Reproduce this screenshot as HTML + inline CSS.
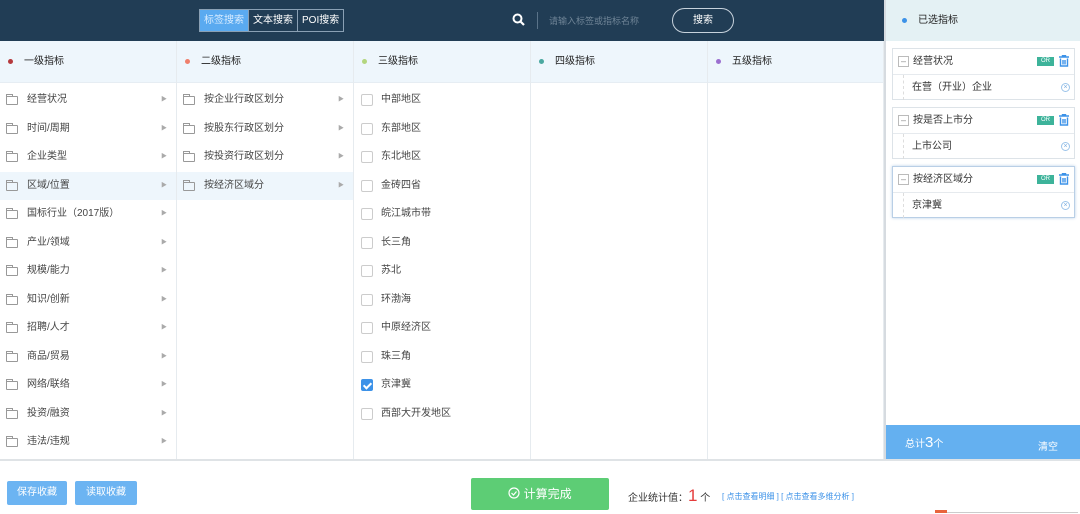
<!DOCTYPE html>
<html><head><meta charset="utf-8"><style>
*{margin:0;padding:0;box-sizing:border-box}
body{width:1080px;height:514px;overflow:hidden;background:#fff;font-family:"Liberation Sans","Noto Sans CJK SC",sans-serif;font-size:10px;color:#333;position:relative}
.top{position:absolute;left:0;top:0;width:884px;height:41px;background:#213d55}
.tabs{position:absolute;left:199px;top:9px;height:23px;display:flex;border:1px solid #8aa0b4}
.tabs div{padding:0 4px;line-height:21px;color:#fff;font-size:10px;border-right:1px solid #8aa0b4}
.tabs div:first-child{background:#5aaaf0;color:#d8ecff}
.tabs div:last-child{border:none}
.sep{position:absolute;left:537px;top:12px;width:1px;height:17px;background:#5a7389}
.ph{position:absolute;left:549px;top:14px;color:#6f8496;font-size:9px}
.sbtn{position:absolute;left:672px;top:8px;width:62px;height:25px;border:1px solid #c7d2dc;border-radius:13px;color:#fff;text-align:center;line-height:23px;font-size:10px}
.col{position:absolute;top:41px;height:418px;border-right:1px solid #e6ebef}
.hd{height:42px;background:#eef6fc;border-bottom:1px solid #e6edf3;line-height:42px;padding-left:24px;font-size:10px;color:#222;position:relative;margin-bottom:3px}
.hd i{position:absolute;left:8px;top:18px;width:5px;height:5px;border-radius:50%}
.row{height:28.5px;line-height:28.5px;padding-left:27px;position:relative;font-size:10px;color:#444}
.row.sel{background:#eef6fc}
.fold{position:absolute;left:6px;top:10px;width:12px;height:9px;border:1px solid #999;border-radius:1px}
.fold:before{content:"";position:absolute;left:-1px;top:-3px;width:5px;height:2px;border:1px solid #999;border-bottom:none}
.arr{position:absolute;right:9px;top:0;color:#aaa;font-size:6px}
.cb{position:absolute;left:7px;top:8px;width:12px;height:12px;border:1px solid #ccc;border-radius:2px;background:#fff}
.cb.on{background:#3c92e8;border-color:#3c92e8}
.cb.on:after{content:"";position:absolute;left:3px;top:1px;width:3px;height:6px;border:solid #fff;border-width:0 2px 2px 0;transform:rotate(45deg)}
.right{position:absolute;left:884px;top:0;width:196px;height:459px;background:#fff;border-left:2px solid #d6dbe0}
.rh{height:41px;background:#e4f1f4;line-height:41px;padding-left:32px;position:relative;color:#222}
.rh i{position:absolute;left:16px;top:18px;width:5px;height:5px;border-radius:50%;background:#3c92e8}
.card{position:absolute;left:6px;width:183px;height:52px;border:1px solid #dde3e8;background:#fff}
.card.act{border-color:#b9cfe6;box-shadow:0 0 3px #b9cfe6}
.card .t{height:26px;line-height:25px;border-bottom:1px solid #e6eaee;padding-left:20px;position:relative}
.card .t b{position:absolute;left:5px;top:7px;width:11px;height:11px;border:1px solid #bbb;font-weight:normal;line-height:8px;text-align:center;font-size:9px;color:#888}
.or{position:absolute;right:20px;top:8px;width:17px;height:9px;background:#3db39a;color:#fff;font-size:6px;line-height:9px;text-align:center}
.trash{position:absolute;right:5px;top:6px}
.card .v{height:25px;line-height:25px;position:relative;border-left:1px dashed #ddd;margin-left:10px;padding-left:8px}
.x{position:absolute;right:4px;top:8px;width:9px;height:9px;border:1px solid #9cc4ea;border-radius:50%;color:#7aaee0;font-size:7px;line-height:7px;text-align:center}
.tot{position:absolute;left:0;top:425px;width:194px;height:34px;background:#64b0f0;color:#fff}
.foot{position:absolute;left:0;top:459px;width:1080px;height:2px;background:#dfe3e6}
.btn{position:absolute;top:481px;height:24px;background:#6cb4f2;color:#fff;line-height:24px;text-align:center;font-size:10px;border-radius:2px}
.green{position:absolute;left:471px;top:478px;width:138px;height:32px;background:#5dcd75;color:#fff;text-align:center;line-height:32px;font-size:12px;border-radius:2px}
</style></head><body>
<div class="top">
<div class="tabs"><div>标签搜索</div><div>文本搜索</div><div>POI搜索</div></div>
<svg style="position:absolute;left:512px;top:13px" width="13" height="13" viewBox="0 0 13 13"><circle cx="5.5" cy="5.5" r="4" fill="none" stroke="#fff" stroke-width="2"/><path d="M8.5 8.5L12 12" stroke="#fff" stroke-width="2.2"/></svg>
<div class="sep"></div>
<div class="ph">请输入标签或指标名称</div>
<div class="sbtn">搜索</div>
</div>

<div class="col" style="left:0;width:177px">
<div class="hd"><i style="background:#b5393d"></i>一级指标</div>
<div class="row"><span class="fold"></span>经营状况<span class="arr">▶</span></div>
<div class="row"><span class="fold"></span>时间/周期<span class="arr">▶</span></div>
<div class="row"><span class="fold"></span>企业类型<span class="arr">▶</span></div>
<div class="row sel"><span class="fold"></span>区域/位置<span class="arr">▶</span></div>
<div class="row"><span class="fold"></span>国标行业（2017版）<span class="arr">▶</span></div>
<div class="row"><span class="fold"></span>产业/领域<span class="arr">▶</span></div>
<div class="row"><span class="fold"></span>规模/能力<span class="arr">▶</span></div>
<div class="row"><span class="fold"></span>知识/创新<span class="arr">▶</span></div>
<div class="row"><span class="fold"></span>招聘/人才<span class="arr">▶</span></div>
<div class="row"><span class="fold"></span>商品/贸易<span class="arr">▶</span></div>
<div class="row"><span class="fold"></span>网络/联络<span class="arr">▶</span></div>
<div class="row"><span class="fold"></span>投资/融资<span class="arr">▶</span></div>
<div class="row"><span class="fold"></span>违法/违规<span class="arr">▶</span></div>
</div>
<div class="col" style="left:177px;width:177px">
<div class="hd"><i style="background:#ef7f6c"></i>二级指标</div>
<div class="row"><span class="fold"></span>按企业行政区划分<span class="arr">▶</span></div>
<div class="row"><span class="fold"></span>按股东行政区划分<span class="arr">▶</span></div>
<div class="row"><span class="fold"></span>按投资行政区划分<span class="arr">▶</span></div>
<div class="row sel"><span class="fold"></span>按经济区域分<span class="arr">▶</span></div>
</div>
<div class="col" style="left:354px;width:177px">
<div class="hd"><i style="background:#b3d67e"></i>三级指标</div>
<div class="row"><span class="cb"></span>中部地区</div>
<div class="row"><span class="cb"></span>东部地区</div>
<div class="row"><span class="cb"></span>东北地区</div>
<div class="row"><span class="cb"></span>金砖四省</div>
<div class="row"><span class="cb"></span>皖江城市带</div>
<div class="row"><span class="cb"></span>长三角</div>
<div class="row"><span class="cb"></span>苏北</div>
<div class="row"><span class="cb"></span>环渤海</div>
<div class="row"><span class="cb"></span>中原经济区</div>
<div class="row"><span class="cb"></span>珠三角</div>
<div class="row"><span class="cb on"></span>京津冀</div>
<div class="row"><span class="cb"></span>西部大开发地区</div>
</div>
<div class="col" style="left:531px;width:177px">
<div class="hd"><i style="background:#4aa8a0"></i>四级指标</div>
</div>
<div class="col" style="left:708px;width:176px">
<div class="hd"><i style="background:#9b6fd0"></i>五级指标</div>
</div>

<div class="right">
<div class="rh"><i></i>已选指标</div>
<div class="card" style="top:48px"><div class="t"><b>–</b>经营状况<span class="or">OR</span><svg class="trash" width="10" height="12" viewBox="0 0 10 12"><path d="M0 2h10M3.5 2V0.7h3V2M1.5 3.5v7.5h7V3.5M4 5v4.5M6 5v4.5" fill="none" stroke="#3c92e8" stroke-width="1.4"/></svg></div><div class="v">在营（开业）企业<span class="x">×</span></div></div>
<div class="card" style="top:107px"><div class="t"><b>–</b>按是否上市分<span class="or">OR</span><svg class="trash" width="10" height="12" viewBox="0 0 10 12"><path d="M0 2h10M3.5 2V0.7h3V2M1.5 3.5v7.5h7V3.5M4 5v4.5M6 5v4.5" fill="none" stroke="#3c92e8" stroke-width="1.4"/></svg></div><div class="v">上市公司<span class="x">×</span></div></div>
<div class="card act" style="top:166px"><div class="t"><b>–</b>按经济区域分<span class="or">OR</span><svg class="trash" width="10" height="12" viewBox="0 0 10 12"><path d="M0 2h10M3.5 2V0.7h3V2M1.5 3.5v7.5h7V3.5M4 5v4.5M6 5v4.5" fill="none" stroke="#3c92e8" stroke-width="1.4"/></svg></div><div class="v">京津冀<span class="x">×</span></div></div>
<div class="tot"><span style="position:absolute;left:19px;top:9px;font-size:10px">总计<span style="font-size:15px">3</span>个</span><span style="position:absolute;left:152px;top:13px;font-size:10px">清空</span></div>
</div>
<div class="foot"></div>
<div class="btn" style="left:7px;width:60px">保存收藏</div>
<div class="btn" style="left:75px;width:62px">读取收藏</div>
<div class="green"><svg width="12" height="12" viewBox="0 0 12 12" style="vertical-align:-1px"><circle cx="6" cy="6" r="5" fill="none" stroke="#fff" stroke-width="1.2"/><path d="M3.5 6l2 2 3-3.5" fill="none" stroke="#fff" stroke-width="1.2"/></svg> 计算完成</div>
<div style="position:absolute;left:628px;top:486px;font-size:10px">企业统计值：<span style="color:#e53c3c;font-size:17px">1</span> 个</div>
<div style="position:absolute;left:722px;top:491px;font-size:8px;color:#3c92e8">[ 点击查看明细 ] [ 点击查看多维分析 ]</div>
<div style="position:absolute;left:938px;top:512px;width:140px;height:1px;background:#ccc"></div>
<div style="position:absolute;left:935px;top:510px;width:12px;height:3px;background:#e8643c"></div>
</body></html>
